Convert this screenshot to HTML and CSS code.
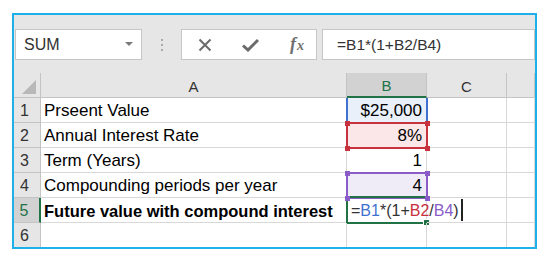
FILE: index.html
```html
<!DOCTYPE html>
<html lang="en">
<head>
    <meta charset="UTF-8">
    <title>Compound interest</title>
    <link rel="stylesheet" href="styles.css">
</head>
<body>
    <div class="window">
        <div class="formula-bar">
            <div class="name-box">
                <span class="name">SUM</span>
                <span class="drop"></span>
            </div>
            <div class="grip"><i></i><i></i><i></i></div>
            <div class="buttons">
                <svg class="btn" width="14" height="14" viewBox="0 0 14 14">
                    <path d="M1.5 1.5 L12.5 12.5 M12.5 1.5 L1.5 12.5" stroke="#6b6b6b" stroke-width="2" fill="none"/>
                </svg>
                <svg class="btn" width="17" height="14" viewBox="0 0 17 14">
                    <path d="M1 7.5 L6 12 L16 2" stroke="#6b6b6b" stroke-width="3" fill="none"/>
                </svg>
                <span class="fx"><i>f</i><i class="x">x</i></span>
            </div>
            <div class="input">=B1*(1+B2/B4)</div>
        </div>
        <div class="sheet">
            <div class="corner"><span></span></div>
            <div class="col-head">A</div>
            <div class="col-head selected">B</div>
            <div class="col-head">C</div>
            <div class="col-head"></div>

            <div class="row-head">1</div>
            <div class="cell">Prseent Value</div>
            <div class="cell num fill-blue">$25,000<span class="ref blue"></span></div>
            <div class="cell"></div>
            <div class="cell"></div>

            <div class="row-head">2</div>
            <div class="cell">Annual Interest Rate</div>
            <div class="cell num fill-red">8%<span class="ref red"><b class="handles"></b></span></div>
            <div class="cell"></div>
            <div class="cell"></div>

            <div class="row-head">3</div>
            <div class="cell">Term (Years)</div>
            <div class="cell num">1</div>
            <div class="cell"></div>
            <div class="cell"></div>

            <div class="row-head">4</div>
            <div class="cell">Compounding periods per year</div>
            <div class="cell num fill-purple">4<span class="ref purple"><b class="handles"></b></span></div>
            <div class="cell"></div>
            <div class="cell"></div>

            <div class="row-head selected">5</div>
            <div class="cell bold">Future value with compound interest</div>
            <div class="cell edit">
                <span class="formula">=<span class="t-blue">B1</span>*(1+<span class="t-red">B2</span>/<span class="t-purple">B4</span>)</span><span class="caret"></span>
                <span class="active"><b class="fill-handle"></b></span>
            </div>
            <div class="cell"></div>
            <div class="cell"></div>

            <div class="row-head">6</div>
            <div class="cell"></div>
            <div class="cell"></div>
            <div class="cell"></div>
            <div class="cell"></div>
        </div>
    </div>
</body>
</html>
```

FILE: styles.css
```css
body {
    margin: 0;
    background-color: #ffffff;
    font-family: 'Liberation Sans', Arial, sans-serif;
}
.window {
    margin: 13px 0 0 12px;
    width: 525px;
    height: 236px;
    box-sizing: border-box;
    border: 2px solid #1fb0ea;
    background-color: #e6e6e6;
    overflow: hidden;
}
.formula-bar {
    display: flex;
    align-items: flex-start;
    height: 58px;
    box-sizing: border-box;
    padding: 14px 0 0 1px;
}
.name-box,
.buttons,
.input {
    height: 31px;
    box-sizing: border-box;
    background-color: #ffffff;
    border: 1px solid #c6c6c6;
}
.name-box {
    width: 127px;
    display: flex;
    align-items: center;
    justify-content: space-between;
    padding: 0 8px 0 8px;
}
.name {
    font-size: 16px;
    color: #333;
}
.drop {
    width: 0;
    height: 0;
    border-left: 4px solid transparent;
    border-right: 4px solid transparent;
    border-top: 4px solid #7a7a7a;
    margin-bottom: 2px;
}
.grip {
    width: 39px;
    height: 31px;
    display: flex;
    flex-direction: column;
    align-items: center;
    justify-content: center;
    gap: 3px;
}
.grip i {
    width: 2px;
    height: 2px;
    background-color: #a8a8a8;
}
.buttons {
    width: 136px;
    display: flex;
    align-items: center;
    padding-left: 16px;
    gap: 30px;
}
.fx {
    font-family: 'Liberation Serif', serif;
    font-size: 18px;
    font-weight: bold;
    color: #707070;
    margin-left: 1px;
}
.fx .x {
    font-size: 14px;
    margin-left: 1px;
}
.input {
    flex: 1;
    margin-left: 5px;
    padding-left: 14px;
    font-size: 15.5px;
    line-height: 29px;
    color: #333;
}
.sheet {
    display: grid;
    grid-template-columns: 27px 306px 80px 80px 28px;
    grid-auto-rows: 25px;
    background-color: #ffffff;
}
.corner,
.col-head,
.row-head {
    background-color: #e6e6e6;
    box-sizing: border-box;
    border-right: 1px solid #c4c4c4;
    border-bottom: 1px solid #c4c4c4;
    color: #333;
}
.corner {
    position: relative;
}
.corner span {
    position: absolute;
    right: 4px;
    bottom: 3px;
    width: 0;
    height: 0;
    border-left: 14px solid transparent;
    border-bottom: 14px solid #b8b8b8;
}
.col-head {
    font-size: 15px;
    display: flex;
    align-items: center;
    justify-content: center;
    padding-top: 2px;
}
.col-head.selected {
    background-color: #d2d2d2;
    color: #217346;
    border-bottom: 2px solid #217346;
}
.row-head {
    font-size: 16px;
    display: flex;
    align-items: flex-end;
    justify-content: center;
    padding: 0 5px 1px 0;
    line-height: 20px;
}
.row-head.selected {
    background-color: #d2d2d2;
    color: #217346;
    border-right: 2px solid #217346;
}
.cell {
    position: relative;
    box-sizing: border-box;
    border-right: 1px solid #d8d8d8;
    border-bottom: 1px solid #d8d8d8;
    font-size: 17px;
    line-height: 20px;
    display: flex;
    align-items: flex-end;
    padding: 0 0 1px 3px;
    white-space: nowrap;
    color: #000;
}
.cell.bold {
    font-weight: bold;
    font-size: 16.5px;
}
.cell.num {
    justify-content: flex-end;
    padding-right: 4px;
}
.fill-blue {
    background-color: #e9f0fa;
}
.fill-red {
    background-color: #fbe7e7;
}
.fill-purple {
    background-color: #f0ecf7;
}
.ref {
    position: absolute;
    left: -1px;
    top: -1px;
    width: 82px;
    height: 27px;
    box-sizing: border-box;
    border: 2px solid;
}
.ref.blue {
    border-color: #3f72d0;
    border-top: none;
    top: 0;
    height: 26px;
}
.ref.red {
    border-color: #c8313e;
}
.ref.purple {
    border-color: #8a5cc8;
}
.handles {
    position: absolute;
    left: -3px;
    top: -3px;
    width: 5px;
    height: 5px;
    z-index: 2;
    background-color: currentColor;
}
.red .handles {
    color: #c8313e;
    box-shadow: 80px 0 0 #c8313e, 0 25px 0 #c8313e, 80px 25px 0 #c8313e;
}
.purple .handles {
    color: #8a5cc8;
    box-shadow: 80px 0 0 #8a5cc8, 0 25px 0 #8a5cc8, 80px 25px 0 #8a5cc8;
}
.cell.edit {
    font-size: 16px;
    color: #333;
    padding-left: 4px;
}
.formula {
    flex-shrink: 0;
}
.t-blue {
    color: #3f72d0;
}
.t-red {
    color: #c8313e;
}
.t-purple {
    color: #8a5cc8;
}
.caret {
    flex-shrink: 0;
    width: 2px;
    height: 22px;
    margin: 0 0 0 2px;
    background-color: #222;
    align-self: center;
}
.active {
    position: absolute;
    left: -1px;
    top: -2px;
    width: 82px;
    height: 28px;
    box-sizing: border-box;
    border: 2px solid #217346;
    border-right: none;
}
.fill-handle {
    position: absolute;
    right: -2px;
    bottom: -4px;
    width: 5px;
    height: 5px;
    background-color: #217346;
    border: 1px solid #ffffff;
}
```
